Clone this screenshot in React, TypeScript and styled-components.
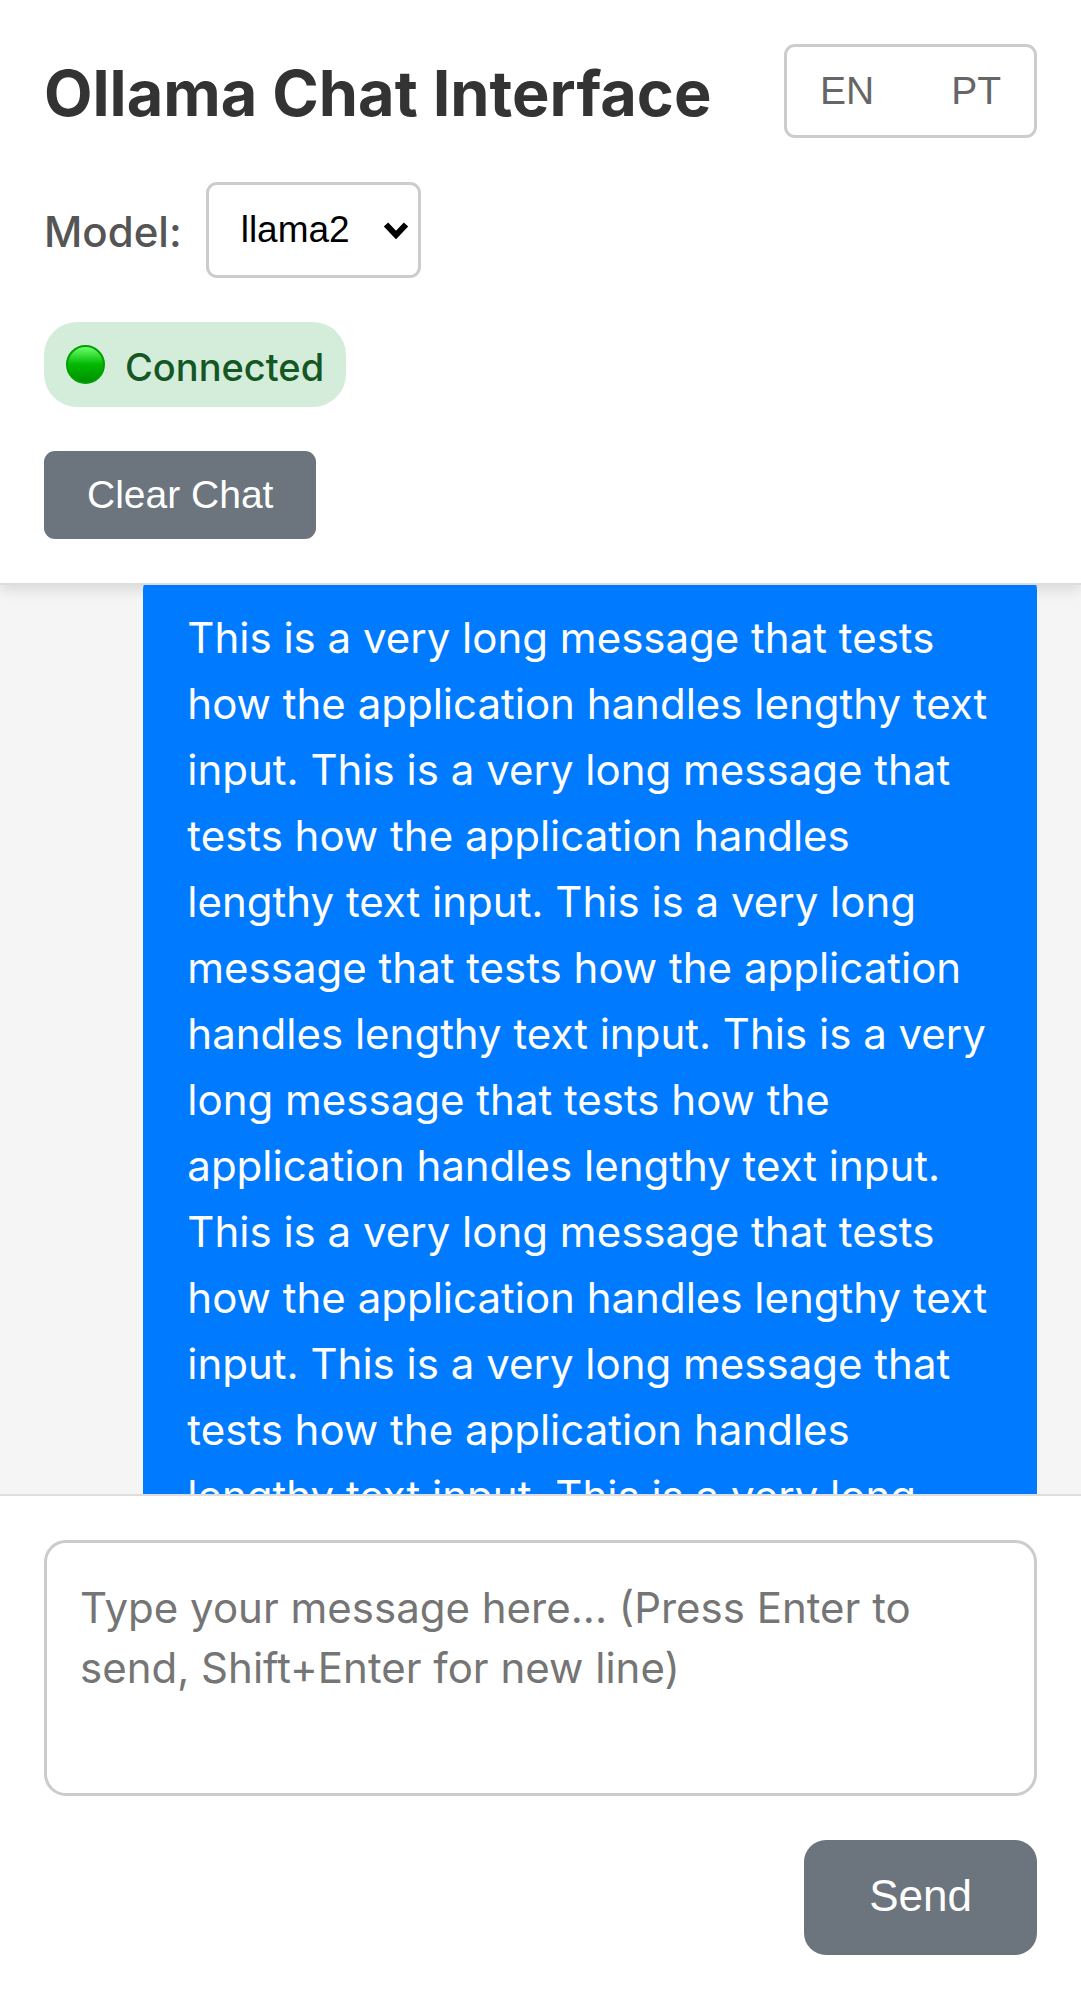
import React, { useLayoutEffect, useRef, useState } from "react";
import styled, { createGlobalStyle } from "styled-components";

const uiFont = `Inter, "Liberation Sans", sans-serif`;
const controlFont = `"Liberation Sans", Arial, sans-serif`;

const GlobalStyle = createGlobalStyle`
  * { box-sizing: border-box; }
  body {
    margin: 0;
    background: #f5f5f5;
    font-family: ${uiFont};
    color: #333;
  }
`;

const Page = styled.div`
  display: flex;
  flex-direction: column;
  height: 100vh;
`;

const Header = styled.header`
  flex: none;
  display: flex;
  flex-direction: column;
  align-items: flex-start;
  gap: 44px;
  padding: 44px;
  background: #fff;
  border-bottom: 2px solid #ddd;
  box-shadow: 0 6px 12px rgba(0, 0, 0, 0.1);
`;

const TitleRow = styled.div`
  display: flex;
  align-items: center;
  justify-content: space-between;
  align-self: stretch;
`;

const Title = styled.h1`
  margin: 0;
  padding-top: 4px;
  font-size: 63px;
  line-height: 80px;
  font-weight: 700;
`;

const LanguageSwitch = styled.div`
  display: flex;
  gap: 11px;
  border: 3px solid #ccc;
  border-radius: 11px;
`;

const LanguageButton = styled.button`
  padding: 22px 33px;
  border: 0;
  border-radius: 8px;
  background: transparent;
  color: #666;
  font: 39px/44px ${controlFont};
`;

const ModelRow = styled.div`
  display: flex;
  align-items: center;
  gap: 24px;
`;

const ModelLabel = styled.label`
  padding-top: 4px;
  color: #555;
  font-size: 42px;
  line-height: 66px;
  font-weight: 500;
`;

const SelectBox = styled.div`
  display: grid;
  align-items: center;
  color: #000;

  > * {
    grid-area: 1 / 1;
  }
`;

const ModelSelect = styled.select`
  appearance: none;
  width: 215px;
  height: 96px;
  padding: 0 66px 0 32px;
  border: 3px solid #ccc;
  border-radius: 11px;
  background: #fff;
  color: inherit;
  font: 37px/42px ${controlFont};
`;

const Chevron = styled.svg`
  justify-self: end;
  width: 26px;
  height: 18px;
  margin-right: 12px;
  pointer-events: none;
`;

const Status = styled.div`
  display: flex;
  align-items: center;
  gap: 20px;
  height: 85px;
  padding: 0 22px;
  border-radius: 33px;
  background: #d4edda;
  color: #155724;
`;

const StatusText = styled.span`
  padding-top: 4px;
  font-size: 38px;
  line-height: 62px;
  font-weight: 500;
`;

const StatusLight = styled.span`
  width: 39px;
  height: 39px;
  border: 2px solid #00a000;
  border-radius: 50%;
  background: linear-gradient(#6cff6c, #00b800 50%, #009000);
`;

const ClearButton = styled.button`
  padding: 22px 43px;
  border: 0;
  border-radius: 11px;
  background: #6c757d;
  color: #fff;
  font: 39px/44px ${controlFont};
`;

const Messages = styled.main`
  flex: 1;
  min-height: 0;
  display: flex;
  flex-direction: column;
  padding: 44px;
  overflow-y: auto;
  scrollbar-width: none;
`;

const UserMessage = styled.p`
  align-self: flex-end;
  max-width: 90%;
  margin: 0;
  padding: 33px 44px;
  border-radius: 18px;
  background: #007bff;
  color: #fff;
  font-size: 42px;
  line-height: 66px;
`;

const Composer = styled.form`
  flex: none;
  display: flex;
  flex-direction: column;
  align-items: flex-end;
  gap: 44px;
  padding: 44px;
  border-top: 2px solid #ddd;
  background: #fff;
`;

const MessageInput = styled.textarea`
  display: block;
  width: 100%;
  height: 256px;
  padding: 35px 33px;
  border: 3px solid #ccc;
  border-radius: 22px;
  background: #fff;
  color: #333;
  font: 42px/60px ${uiFont};
  resize: none;

  &::placeholder {
    color: #757575;
  }
`;

const SendButton = styled.button`
  padding: 32px 65px 35px;
  border: 0;
  border-radius: 22px;
  background: #6c757d;
  color: #fff;
  font: 44px/48px ${controlFont};
`;

const sentence =
  "This is a very long message that tests how the application handles lengthy text input.";
const longMessage = Array(7).fill(sentence).join(" ");

export default function App() {
  const list = useRef<HTMLElement>(null);
  const [draft, setDraft] = useState("");

  useLayoutEffect(() => {
    if (list.current) list.current.scrollTop = 57;
  }, []);

  return (
    <>
      <GlobalStyle />
      <Page>
        <Header>
          <TitleRow>
            <Title>Ollama Chat Interface</Title>
            <LanguageSwitch>
              <LanguageButton type="button">EN</LanguageButton>
              <LanguageButton type="button">PT</LanguageButton>
            </LanguageSwitch>
          </TitleRow>
          <ModelRow>
            <ModelLabel htmlFor="model">Model:</ModelLabel>
            <SelectBox>
              <ModelSelect id="model" defaultValue="llama2">
                <option value="llama2">llama2</option>
              </ModelSelect>
              <Chevron viewBox="0 0 26 18" aria-hidden="true">
                <path d="M3 3.5 13 14 23 3.5" fill="none" stroke="currentColor" strokeWidth="6" />
              </Chevron>
            </SelectBox>
          </ModelRow>
          <Status role="status">
            <StatusLight aria-hidden="true" />
            <StatusText>Connected</StatusText>
          </Status>
          <ClearButton type="button">Clear Chat</ClearButton>
        </Header>
        <Messages ref={list}>
          <UserMessage>{longMessage}</UserMessage>
        </Messages>
        <Composer onSubmit={(event) => event.preventDefault()}>
          <MessageInput
            aria-label="Message"
            value={draft}
            onChange={(event) => setDraft(event.target.value)}
            placeholder="Type your message here... (Press Enter to send, Shift+Enter for new line)"
          />
          <SendButton type="submit">Send</SendButton>
        </Composer>
      </Page>
    </>
  );
}
